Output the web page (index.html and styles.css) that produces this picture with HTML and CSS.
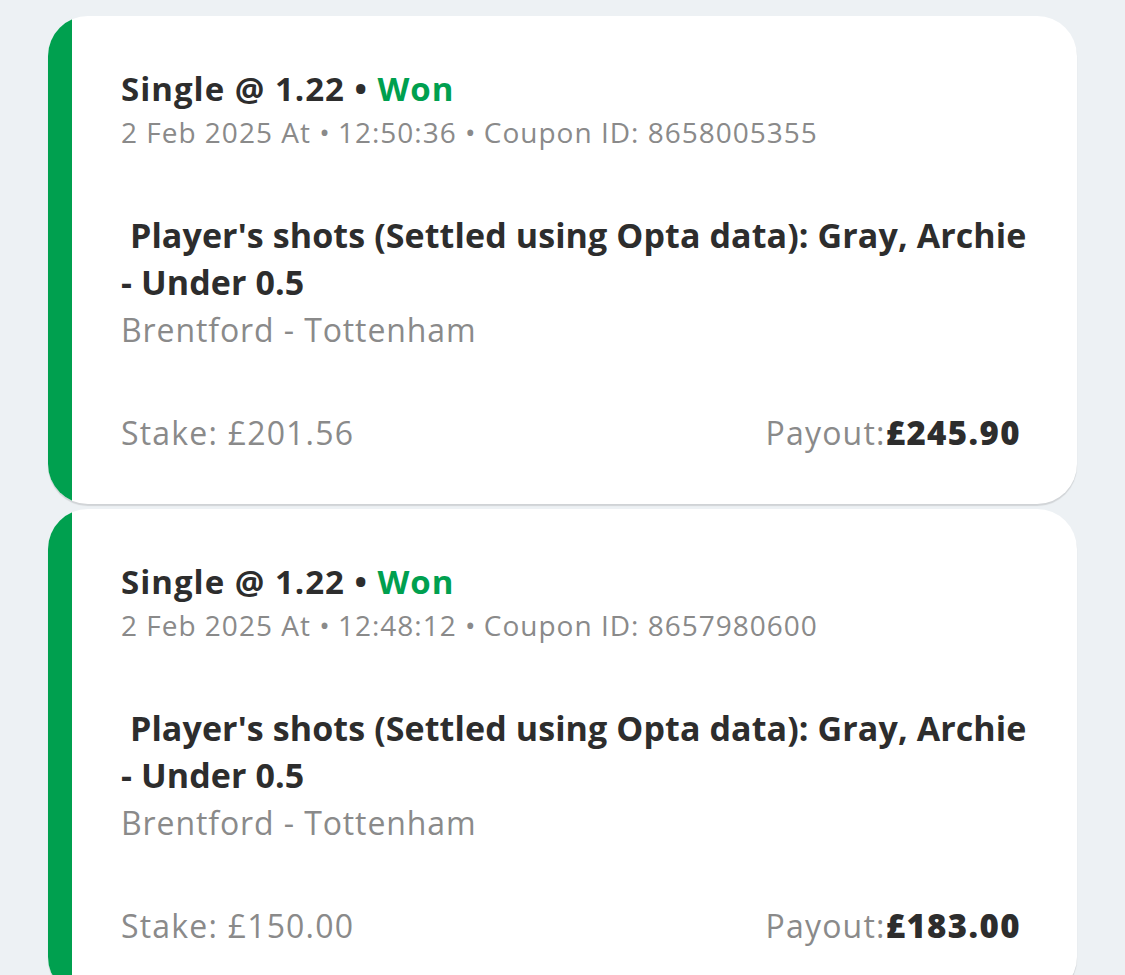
FILE: index.html
```html
<!DOCTYPE html>
<html lang="en">
<head>
<meta charset="utf-8">
<title>Bets</title>
<link rel="stylesheet" href="styles.css">
</head>
<body>
<div class="list">
  <div class="card">
    <div class="strip"></div>
    <div class="content">
      <div class="title">Single @ 1.22 • <span class="won">Won</span></div>
      <div class="meta">2 Feb 2025 At <span class="dot">•</span> 12:50:36 <span class="dot">•</span> Coupon ID: 8658005355</div>
      <div class="bet">&nbsp;Player's shots (Settled using Opta data): Gray, Archie -&nbsp;Under 0.5</div>
      <div class="match">Brentford - Tottenham</div>
      <div class="money">
        <div class="stake">Stake: £201.56</div>
        <div class="payout">Payout:<b>£245.90</b></div>
      </div>
    </div>
  </div>
  <div class="card">
    <div class="strip"></div>
    <div class="content">
      <div class="title">Single @ 1.22 • <span class="won">Won</span></div>
      <div class="meta">2 Feb 2025 At <span class="dot">•</span> 12:48:12 <span class="dot">•</span> Coupon ID: 8657980600</div>
      <div class="bet">&nbsp;Player's shots (Settled using Opta data): Gray, Archie -&nbsp;Under 0.5</div>
      <div class="match">Brentford - Tottenham</div>
      <div class="money">
        <div class="stake">Stake: £150.00</div>
        <div class="payout">Payout:<b>£183.00</b></div>
      </div>
    </div>
  </div>
</div>
</body>
</html>
```

FILE: styles.css
```css
html, body {
  margin: 0;
  padding: 0;
  background: #edf1f4;
  font-family: "Open Sans", "Liberation Sans", sans-serif;
}
.list {
  padding: 16px 48px 0 48px;
  display: flex;
  flex-direction: column;
  gap: 5px;
}
.card {
  display: flex;
  width: 1029px;
  background: #ffffff;
  border-radius: 40px;
  overflow: hidden;
  box-shadow: 0 2px 1px rgba(0,0,0,0.12);
}
.strip {
  width: 24px;
  flex: none;
  background: #00a04f;
}
.content {
  flex: 1;
  padding: 53px 40px 51px 49px;
}
.title {
  font-size: 33px;
  font-weight: 700;
  letter-spacing: 1px;
  line-height: 40px;
  color: #2d2d2d;
}
.won { color: #00a04f; }
.meta {
  margin-top: 6px;
  font-size: 28px;
  letter-spacing: 1px;
  line-height: 34px;
  color: #8a8a8a;
}
.dot { font-size: 28px; letter-spacing: 0; }
.bet {
  margin-top: 63px;
  font-size: 34px;
  font-weight: 700;
  letter-spacing: 0.1px;
  line-height: 47px;
  color: #2d2d2d;
}
.match {
  margin-top: 4px;
  font-size: 32px;
  letter-spacing: 0.9px;
  line-height: 40px;
  color: #8a8a8a;
}
.money {
  margin-top: 63px;
  padding-right: 16px;
  display: flex;
  justify-content: space-between;
  align-items: baseline;
  font-size: 32px;
  letter-spacing: 1.2px;
  line-height: 40px;
  color: #8a8a8a;
}
.payout b {
  color: #2d2d2d;
  font-weight: 800;
  font-size: 33px;
  letter-spacing: 1.4px;
}
```
